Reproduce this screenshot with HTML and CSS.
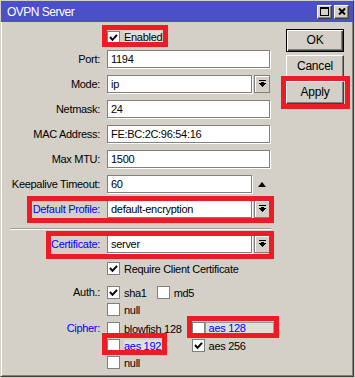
FILE: index.html
```html
<!DOCTYPE html>
<html>
<head>
<meta charset="utf-8">
<title>OVPN Server</title>
<link rel="stylesheet" href="styles.css">
</head>
<body>
<div class="window">
  <div class="titlebar">
    <span class="title">OVPN Server</span>
    <div class="tb-buttons">
      <span class="tb-btn"><svg width="9" height="9" viewBox="0 0 9 9" shape-rendering="crispEdges"><rect x="0" y="0" width="9" height="2" fill="#000"/><rect x="0.5" y="0.5" width="8" height="8" fill="none" stroke="#000"/></svg></span>
      <span class="tb-btn"><svg width="8" height="7" viewBox="0 0 8 7"><path d="M1 0.5 L7 6.5 M7 0.5 L1 6.5" stroke="#000" stroke-width="2" fill="none"/></svg></span>
    </div>
  </div>
  <div class="content">
    <div class="form">
      <div class="row row-enabled">
        <span class="label"></span>
        <span class="check field"><span class="box"><svg class="tick" width="9" height="9" viewBox="0 0 9 9"><path d="M1 4 L3.5 6.8 L8 1.8" stroke="#000" stroke-width="2" fill="none"/></svg></span><span class="ctext hl">Enabled</span></span>
      </div>
      <div class="row field-row"><span class="label">Port:</span><span class="input field">1194</span></div>
      <div class="row field-row"><span class="label">Mode:</span><span class="input short field">ip</span><span class="dd"><svg width="7" height="8" viewBox="0 0 7 8" shape-rendering="crispEdges"><rect x="0" y="0" width="7" height="1"/><rect x="2" y="2" width="3" height="2"/><polygon points="0,3 7,3 3.5,7"/></svg></span></div>
      <div class="row field-row"><span class="label">Netmask:</span><span class="input field">24</span></div>
      <div class="row field-row"><span class="label">MAC Address:</span><span class="input field">FE:BC:2C:96:54:16</span></div>
      <div class="row field-row"><span class="label">Max MTU:</span><span class="input field">1500</span></div>
      <div class="row field-row"><span class="label">Keepalive Timeout:</span><span class="input short field">60</span><span class="updown"><span class="tri"></span></span></div>
      <div class="row field-row"><span class="label blue">Default Profile:</span><span class="input short field">default-encryption</span><span class="dd"><svg width="7" height="8" viewBox="0 0 7 8" shape-rendering="crispEdges"><rect x="0" y="0" width="7" height="1"/><rect x="2" y="2" width="3" height="2"/><polygon points="0,3 7,3 3.5,7"/></svg></span></div>
      <div class="sep"></div>
      <div class="row field-row"><span class="label blue">Certificate:</span><span class="input short field">server</span><span class="dd"><svg width="7" height="8" viewBox="0 0 7 8" shape-rendering="crispEdges"><rect x="0" y="0" width="7" height="1"/><rect x="2" y="2" width="3" height="2"/><polygon points="0,3 7,3 3.5,7"/></svg></span></div>
      <div class="row check-row">
        <span class="label"></span>
        <span class="check field"><span class="box"><svg class="tick" width="9" height="9" viewBox="0 0 9 9"><path d="M1 4 L3.5 6.8 L8 1.8" stroke="#000" stroke-width="2" fill="none"/></svg></span><span class="ctext">Require Client Certificate</span></span>
      </div>
      <div class="group group-auth">
        <span class="label">Auth.:</span>
        <div class="checks field">
          <span class="check"><span class="box"><svg class="tick" width="9" height="9" viewBox="0 0 9 9"><path d="M1 4 L3.5 6.8 L8 1.8" stroke="#000" stroke-width="2" fill="none"/></svg></span><span class="ctext">sha1</span></span>
          <span class="check"><span class="box"></span><span class="ctext">md5</span></span>
          <span class="check"><span class="box"></span><span class="ctext">null</span></span>
        </div>
      </div>
      <div class="group group-cipher">
        <span class="label blue">Cipher:</span>
        <div class="checks field">
          <span class="check"><span class="box"></span><span class="ctext">blowfish 128</span></span>
          <span class="check"><span class="box"></span><span class="hl-box blue">aes 128</span></span>
          <span class="check"><span class="box"></span><span class="ctext hl blue">aes 192</span></span>
          <span class="check"><span class="box"><svg class="tick" width="9" height="9" viewBox="0 0 9 9"><path d="M1 4 L3.5 6.8 L8 1.8" stroke="#000" stroke-width="2" fill="none"/></svg></span><span class="ctext">aes 256</span></span>
          <span class="check"><span class="box"></span><span class="ctext">null</span></span>
        </div>
      </div>
    </div>
    <div class="buttons">
      <span class="btn btn-default">OK</span>
      <span class="btn">Cancel</span>
      <span class="btn">Apply</span>
    </div>
  </div>
  <div class="annot a-enabled"></div>
  <div class="annot a-apply"></div>
  <div class="annot a-profile"></div>
  <div class="annot a-cert"></div>
  <div class="annot a-aes128"></div>
  <div class="annot a-aes192"></div>
</div>
</body>
</html>
```
FILE: styles.css
```css
* { box-sizing: border-box; }
html, body { margin: 0; padding: 0; }
body {
  width: 355px;
  height: 378px;
  overflow: hidden;
  background: #d4d0c8;
  font-family: "Liberation Sans", Arial, sans-serif;
  font-size: 11px;
  letter-spacing: -0.3px;
  color: #000;
}
.window {
  position: relative;
  width: 354px;
  height: 377px;
  background: #d4d0c8;
  border: 1px solid;
  border-color: #d4d0c8 #404040 #404040 #d4d0c8;
  box-shadow: inset 1px 1px #fff, inset -1px -1px #808080;
  display: flex;
  flex-direction: column;
}
.titlebar {
  height: 21px;
  flex: none;
  background: #4b4fc8;
  display: flex;
  align-items: center;
  padding: 0 4px 0 6px;
}
.title {
  color: #fff;
  font-size: 12px;
  letter-spacing: -0.5px;
}
.tb-buttons {
  margin-left: auto;
  display: flex;
  gap: 2px;
}
.tb-btn {
  width: 15px;
  height: 14px;
  background: #d4d0c8;
  border: 1px solid;
  border-color: #fff #404040 #404040 #fff;
  box-shadow: inset -1px -1px #808080;
  display: flex;
  align-items: center;
  justify-content: center;
}
.content {
  flex: 1;
  display: flex;
}
.form {
  width: 285px;
  flex: none;
  display: flex;
  flex-direction: column;
}
.row {
  display: flex;
  align-items: center;
  height: 18px;
}
.row-enabled { margin-top: 6px; margin-bottom: -3px; }
.field-row { margin-top: 7px; }
.label {
  width: 99px;
  flex: none;
  text-align: right;
  white-space: nowrap;
}
.blue { color: #0000ff; }
.field { margin-left: 7px; }
.input {
  width: 163px;
  height: 18px;
  background: #fff;
  border: 1px solid #808080;
  box-shadow: 1px 1px 0 #fff;
  padding-left: 3px;
  line-height: 16px;
  white-space: nowrap;
  overflow: hidden;
}
.input.short { width: 145px; }
.dd {
  width: 16px;
  height: 18px;
  margin-left: 2px;
  background: #d4d0c8;
  border: 1px solid #808080;
  box-shadow: inset 1px 1px #fff;
  display: flex;
  align-items: center;
  justify-content: center;
}
.updown {
  width: 18px;
  height: 18px;
  display: flex;
  align-items: center;
  justify-content: center;
}
.tri {
  width: 0;
  height: 0;
  border-left: 4.5px solid transparent;
  border-right: 4.5px solid transparent;
  border-bottom: 5px solid #000;
  margin-left: 1px;
}
.sep {
  margin: 10px 0 -2px 9px;
  width: 261px;
  height: 2px;
  border-top: 1px solid #a09d96;
  border-bottom: 1px solid #fff;
}
.check-row { margin-top: 7px; height: 17px; }
.check {
  display: flex;
  align-items: center;
  height: 17px;
  white-space: nowrap;
}
.box {
  width: 13px;
  height: 13px;
  flex: none;
  background: #fff;
  border: 1px solid #808080;
  display: flex;
  align-items: center;
  justify-content: center;
}
.ctext { margin-left: 4px; }
.hl { background: #e2dfd9; }
.hl-box {
  width: 69px;
  height: 13px;
  line-height: 11px;
  padding-left: 3px;
  background: #e2dfd9;
  border: 1px solid #9c9992;
}
.group {
  display: flex;
  align-items: flex-start;
}
.group .label { line-height: 17px; }
.group-auth { margin-top: 7px; }
.group-cipher { margin-top: 2px; }
.checks {
  display: grid;
  grid-template-columns: auto auto;
  grid-auto-rows: 17px;
  column-gap: 10px;
  justify-content: start;
}
.buttons {
  width: 58px;
  flex: none;
  padding-top: 7px;
  display: flex;
  flex-direction: column;
  gap: 3px;
}
.btn {
  height: 23px;
  background: #d4d0c8;
  border: 1px solid;
  border-color: #fff #404040 #404040 #fff;
  box-shadow: inset -1px -1px #808080;
  text-align: center;
  line-height: 21px;
  font-size: 12px;
  letter-spacing: -0.2px;
}
.btn-default {
  border-color: #000;
  box-shadow: inset 1px 1px #fff, inset -1px -1px #404040, inset -2px -2px #808080;
}
.annot {
  position: absolute;
  border: 5px solid #ed1c24;
}
.a-enabled { left: 101px; top: 24px; width: 66px; height: 22px; }
.a-apply { left: 280px; top: 75px; width: 69px; height: 33px; }
.a-profile { left: 26px; top: 195px; width: 247px; height: 27px; }
.a-cert { left: 45px; top: 230px; width: 228px; height: 28px; }
.a-aes128 { left: 186px; top: 315px; width: 92px; height: 22px; }
.a-aes192 { left: 101px; top: 332px; width: 65px; height: 22px; }
```
